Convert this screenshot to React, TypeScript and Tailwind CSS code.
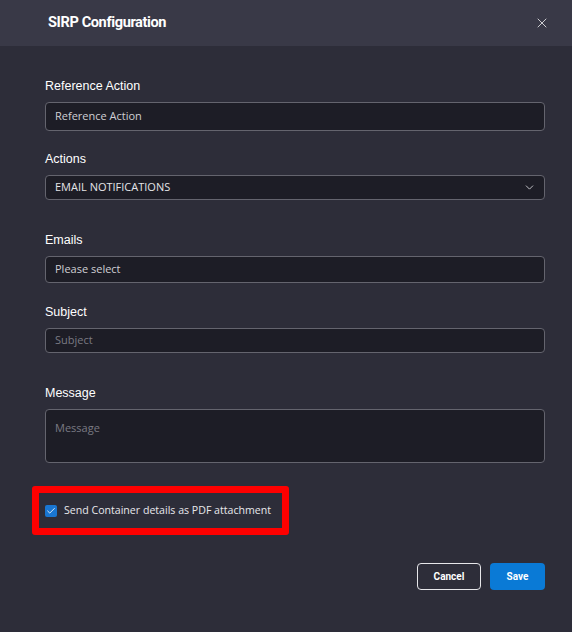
import { Check, ChevronDown, X } from 'lucide-react';

const inputBox =
  'w-full rounded-[4px] border border-[#64646e] bg-[#1d1d26] px-[9px] text-[11px] [font-family:"Open_Sans",sans-serif]';

function Label({ children, className = '' }: { children: string; className?: string }) {
  return (
    <div className={`text-[12.5px] leading-[15px] text-white [font-family:"Liberation_Sans",Arial,sans-serif] ${className}`}>
      {children}
    </div>
  );
}

export default function App() {
  return (
    <div className="flex h-[632px] w-[572px] flex-col bg-[#2d2d39]">
      {/* header */}
      <div className="flex h-[46px] shrink-0 items-center justify-between bg-[#393947] pl-[48px] pr-[22px]">
        <span className="text-[14.6px] font-bold tracking-[-0.4px] text-white [font-family:Roboto,sans-serif]">
          SIRP Configuration
        </span>
        <X size={16} strokeWidth={1.4} className="text-[#d8d8dc]" />
      </div>

      {/* form */}
      <div className="flex flex-col pl-[45px] pr-[27px]">
        <Label className="mt-[33px]">Reference Action</Label>
        <div className={`${inputBox} mt-[8px] flex h-[29px] items-center text-[#cfcfd4]`}>Reference Action</div>

        <Label className="mt-[21px]">Actions</Label>
        <div className={`${inputBox} mt-[8px] flex h-[25px] items-center justify-between pr-[8px] text-[#e4e4e8]`}>
          <span>EMAIL NOTIFICATIONS</span>
          <ChevronDown size={13} strokeWidth={1.6} className="text-[#d8d8dc]" />
        </div>

        <Label className="mt-[33px]">Emails</Label>
        <div className={`${inputBox} mt-[8px] flex h-[27px] items-center text-[#cfcfd4]`}>Please select</div>

        <Label className="mt-[22px]">Subject</Label>
        <div className={`${inputBox} mt-[8px] flex h-[25px] items-center text-[#7a7a83]`}>Subject</div>

        <Label className="mt-[33px]">Message</Label>
        <div className={`${inputBox} mt-[8px] h-[54px] pt-[11px] leading-[14px] text-[#7a7a83]`}>Message</div>

        {/* checkbox, highlighted */}
        <div className="-ml-[13px] mt-[23px] flex h-[49px] w-[257px] items-center gap-[7px] rounded-[3px] border-[7px] border-[#fe0000] pl-[6px]">
          <span className="flex h-[12px] w-[12px] items-center justify-center rounded-[2px] bg-[#1976d2]">
            <Check size={10} strokeWidth={2} className="text-white" />
          </span>
          <span className="text-[10.6px] text-[#e8e8ec] [font-family:'Open_Sans',sans-serif]">
            Send Container details as PDF attachment
          </span>
        </div>

        {/* buttons */}
        <div className="mt-[28px] flex justify-end gap-[9px]">
          <button className="flex h-[27px] w-[64px] items-center justify-center rounded-[4px] border border-[#e6e6ea] text-[10px] font-bold text-white [font-family:Roboto,sans-serif]">
            Cancel
          </button>
          <button className="flex h-[27px] w-[55px] items-center justify-center rounded-[4px] bg-[#0a7ad6] text-[10px] font-bold text-white [font-family:Roboto,sans-serif]">
            Save
          </button>
        </div>
      </div>
    </div>
  );
}
